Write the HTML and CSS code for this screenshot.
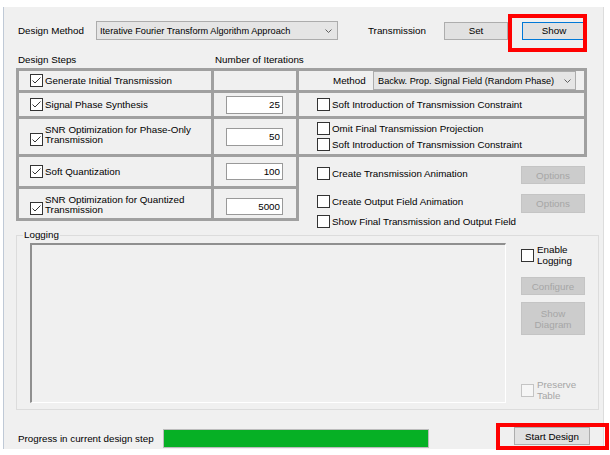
FILE: index.html
```html
<!DOCTYPE html>
<html>
<head>
<meta charset="utf-8">
<link rel="stylesheet" href="styles.css">
</head>
<body>
<div class="window">
  <div class="topbar">
    <span class="lbl-method">Design Method</span>
    <div class="combo combo-main"><span>Iterative Fourier Transform Algorithm Approach</span><svg class="arrow" width="7" height="4" viewBox="0 0 7 4"><polyline points="0.5,0.5 3.5,3.5 6.5,0.5" fill="none" stroke="#606060" stroke-width="1"/></svg></div>
    <span class="lbl-trans">Transmission</span>
    <div class="btn btn-set">Set</div>
    <div class="hl hl-show"><div class="btn btn-show">Show</div><span class="redbox"></span></div>
  </div>

  <div class="heads"><span class="h-steps">Design Steps</span><span>Number of Iterations</span></div>

  <div class="steps">
    <div class="tbl tbl-left">
      <div class="cell c1"><label class="chk"><span class="cb"><svg width="11" height="11" viewBox="0 0 11 11"><polyline points="1.5,5.5 4,8 9.5,2.5" fill="none" stroke="#333" stroke-width="1"/></svg></span><span class="t">Generate Initial Transmission</span></label></div>
      <div class="cell c2"></div>

      <div class="cell c1"><label class="chk"><span class="cb"><svg width="11" height="11" viewBox="0 0 11 11"><polyline points="1.5,5.5 4,8 9.5,2.5" fill="none" stroke="#333" stroke-width="1"/></svg></span><span class="t">Signal Phase Synthesis</span></label></div>
      <div class="cell c2"><div class="num">25</div></div>

      <div class="cell c1"><label class="chk two"><span class="cb"><svg width="11" height="11" viewBox="0 0 11 11"><polyline points="1.5,5.5 4,8 9.5,2.5" fill="none" stroke="#333" stroke-width="1"/></svg></span><span class="t">SNR Optimization for Phase-Only<br>Transmission</span></label></div>
      <div class="cell c2"><div class="num">50</div></div>

      <div class="cell c1"><label class="chk"><span class="cb"><svg width="11" height="11" viewBox="0 0 11 11"><polyline points="1.5,5.5 4,8 9.5,2.5" fill="none" stroke="#333" stroke-width="1"/></svg></span><span class="t">Soft Quantization</span></label></div>
      <div class="cell c2"><div class="num num-s">100</div></div>

      <div class="cell c1 low"><label class="chk two"><span class="cb"><svg width="11" height="11" viewBox="0 0 11 11"><polyline points="1.5,5.5 4,8 9.5,2.5" fill="none" stroke="#333" stroke-width="1"/></svg></span><span class="t">SNR Optimization for Quantized<br>Transmission</span></label></div>
      <div class="cell c2 low"><div class="num num-s">5000</div></div>
    </div>

    <div class="right-col">
      <div class="tbl tbl-right">
        <div class="cell cr-method">
          <span class="lbl-m">Method</span>
          <div class="combo combo-method"><span>Backw. Prop. Signal Field (Random Phase)</span><svg class="arrow" width="7" height="4" viewBox="0 0 7 4"><polyline points="0.5,0.5 3.5,3.5 6.5,0.5" fill="none" stroke="#606060" stroke-width="1"/></svg></div>
        </div>
        <div class="cell cr">
          <label class="chk"><span class="cb"></span><span class="t">Soft Introduction of Transmission Constraint</span></label>
        </div>
        <div class="cell cr cr-stack">
          <label class="chk"><span class="cb"></span><span class="t">Omit Final Transmission Projection</span></label>
          <label class="chk"><span class="cb"></span><span class="t">Soft Introduction of Transmission Constraint</span></label>
        </div>
      </div>
      <div class="opts">
        <div class="orow orow1">
          <label class="chk"><span class="cb"></span><span class="t">Create Transmission Animation</span></label>
          <div class="btn btn-dis">Options</div>
        </div>
        <div class="orow orow2">
          <label class="chk"><span class="cb"></span><span class="t">Create Output Field Animation</span></label>
          <div class="btn btn-dis btn-tall">Options</div>
        </div>
        <div class="orow orow3">
          <label class="chk"><span class="cb"></span><span class="t">Show Final Transmission and Output Field</span></label>
        </div>
      </div>
    </div>
  </div>

  <div class="group">
    <div class="gtitle">Logging</div>
    <div class="gbody">
      <div class="logbox"></div>
      <div class="gside">
        <label class="chk two-s enable"><span class="cb"></span><span class="t">Enable<br>Logging</span></label>
        <div class="btn btn-dis cfg">Configure</div>
        <div class="btn btn-dis diag">Show<br>Diagram</div>
        <label class="chk two-s preserve"><span class="cb cb-dis"></span><span class="t dis">Preserve<br>Table</span></label>
      </div>
    </div>
  </div>

  <div class="bottom">
    <span class="plabel">Progress in current design step</span>
    <div class="progress"><div class="fill" style="width:100%"></div></div>
    <div class="hl hl-start"><div class="btn btn-start">Start Design</div><span class="redbox"></span></div>
  </div>
</div>
</body>
</html>
```
FILE: styles.css
```css
* { box-sizing: border-box; }
html, body { margin: 0; padding: 0; background: #ffffff; }
body {
  font-family: "Liberation Sans", Arial, sans-serif;
  font-size: 9.8px;
  color: #000;
  width: 610px;
  height: 455px;
  overflow: hidden;
}
.window {
  width: 601px;
  height: 442px;
  margin: 7px 0 0 3px;
  padding-top: 14px;
  background: #f0f0f0;
  border-left: 1px solid #bfc9d6;
  border-right: 1px solid #dcdcdc;
}
.topbar {
  display: flex;
  align-items: center;
  height: 19px;
  padding-left: 14px;
}
.lbl-method { width: 78px; }
.combo {
  display: flex;
  align-items: center;
  justify-content: space-between;
  background: #e5e5e5;
  border: 1px solid #acacac;
  font-size: 9.2px;
  white-space: nowrap;
}
.combo-main { width: 242px; height: 19px; padding: 0 5px 0 3px; }
.combo-method { width: 203px; height: 19px; padding: 0 4px 0 4px; }
.lbl-trans { margin-left: 30px; width: 76px; }
.btn {
  width: 64px;
  height: 18px;
  background: #e1e1e1;
  border: 1px solid #adadad;
  display: flex;
  align-items: center;
  justify-content: center;
  text-align: center;
  flex: none;
}
.btn-show { border-color: #0078d7; }
.hl { position: relative; flex: none; }
.hl-show { margin-left: 14px; }
.redbox {
  position: absolute;
  border: 4px solid #ff0000;
}
.hl-show .redbox { left: -14px; top: -8px; width: 79px; height: 38px; }

.heads {
  display: flex;
  align-items: center;
  height: 12px;
  margin-top: 13px;
  padding-left: 14px;
}
.h-steps { width: 197px; }

.steps {
  display: flex;
  align-items: flex-start;
  margin-top: 3px;
  padding-left: 12px;
}
.tbl {
  display: grid;
  gap: 3px;
  border: 3px solid #a0a0a0;
  background: #a0a0a0;
}
.tbl-left {
  width: 283px;
  grid-template-columns: 192px 82px;
  grid-template-rows: 19px 23px 35px 29px 29px;
}
.cell {
  background: #f0f0f0;
  display: flex;
  align-items: center;
}
.c1 { padding-left: 11px; }
.c2 { padding-left: 12px; }
.low { padding-top: 5px; }
.right-col { margin-left: -3px; width: 291px; }
.tbl-right {
  grid-template-columns: 1fr;
  grid-template-rows: 19px 23px 35px;
}
.cr { padding-left: 18px; }
.cr-method { padding-left: 34px; }
.lbl-m { width: 40px; }
.cr-stack {
  flex-direction: column;
  align-items: flex-start;
  justify-content: center;
  gap: 3px;
}

.chk { display: flex; align-items: center; }
.cb {
  width: 13px;
  height: 13px;
  border: 1px solid #333333;
  background: #ffffff;
  flex: none;
  display: flex;
  align-items: center;
  justify-content: center;
}
.chk .t { margin-left: 2px; white-space: nowrap; }
.two .t { line-height: 10px; margin-bottom: 3px; }
.two .cb { margin-top: 5px; }
.two-s .t { line-height: 11px; margin-left: 3px; }
.cb-dis { border-color: #c4c4c4; background: #f6f6f6; }
.dis { color: #a6a6a6; }

.num {
  width: 57px;
  height: 18px;
  background: #ffffff;
  border: 1px solid #999999;
  text-align: right;
  padding-right: 2px;
  line-height: 16px;
}
.num-s { height: 17px; line-height: 15px; }

.opts { padding: 9px 2px 0 21px; }
.orow { display: flex; align-items: flex-start; justify-content: space-between; }
.orow .chk { margin-top: 1px; }
.orow1 { height: 18px; }
.orow2 { height: 19px; margin-top: 10px; }
.orow3 { height: 13px; margin-top: 2px; }
.orow3 .chk { margin-top: 0; }
.btn-dis { background: #cccccc; border-color: #c4c4c4; color: #a6a6a6; }
.btn-tall { height: 19px; }

.group {
  margin: 7px 0 0 12px;
  width: 583px;
  height: 175px;
  border: 1px solid #dcdcdc;
}
.gtitle {
  margin: -7px 0 0 6px;
  padding: 0 1px;
  width: max-content;
  height: 12px;
  line-height: 12px;
  background: #f0f0f0;
}
.gbody { display: flex; align-items: flex-start; }
.logbox {
  margin: 2px 0 0 13px;
  width: 476px;
  height: 160px;
  border-top: 2px solid #8f8f8f;
  border-left: 2px solid #8f8f8f;
  border-right: 1px solid #ffffff;
  border-bottom: 1px solid #ffffff;
  background: #f0f0f0;
}
.gside {
  margin-left: 15px;
  width: 64px;
  display: flex;
  flex-direction: column;
}
.enable { margin-top: 3px; }
.cfg { margin-top: 11px; }
.diag { margin-top: 7px; height: 33px; line-height: 11px; }
.preserve { margin-top: 44px; }

.bottom {
  display: flex;
  align-items: center;
  height: 19px;
  margin-top: 19px;
  padding-left: 14px;
}
.plabel { width: 145px; }
.progress {
  width: 266px;
  height: 19px;
  border: 1px solid #bcbcbc;
  background: #e6e6e6;
}
.fill { height: 100%; background: #06b025; }
.hl-start { margin-left: 85px; align-self: flex-start; margin-top: -2px; }
.btn-start { width: 76px; height: 18px; }
.hl-start .redbox { left: -18px; top: -4px; width: 113px; height: 27px; }
```
